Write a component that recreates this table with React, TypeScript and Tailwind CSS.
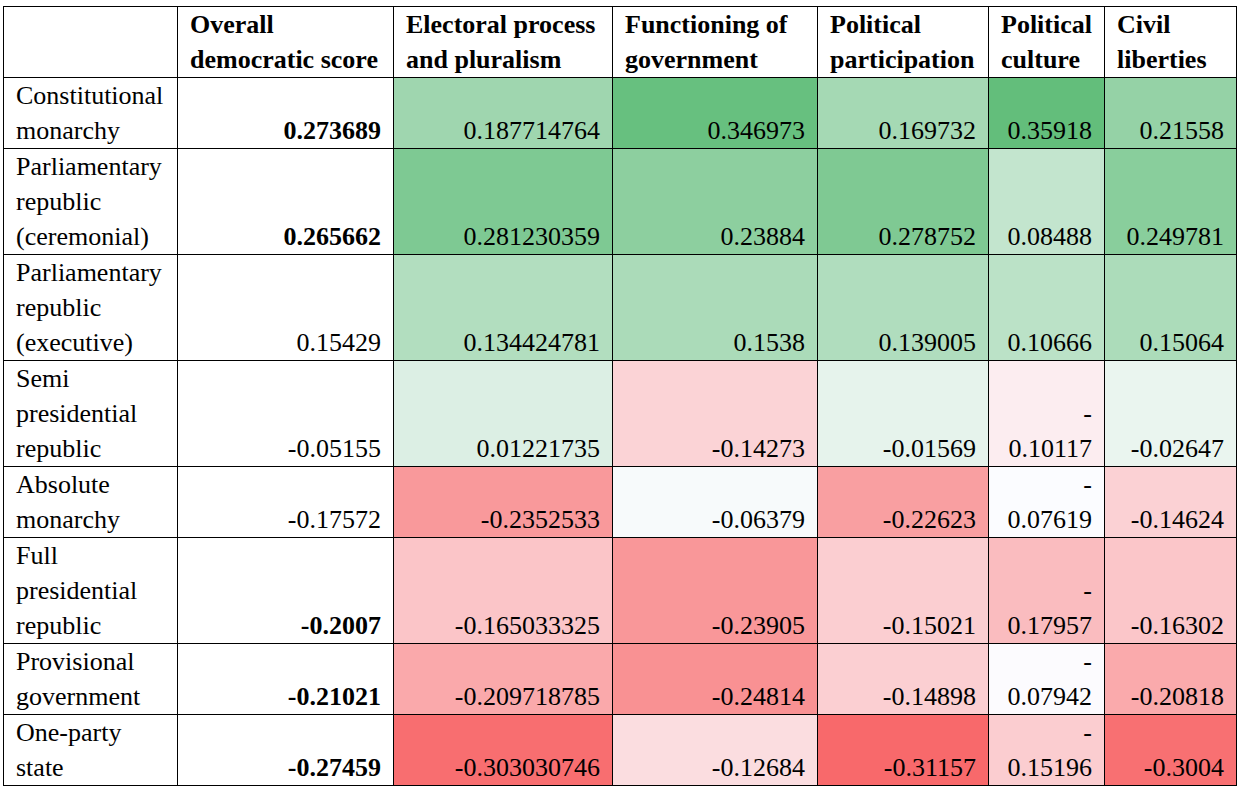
type Row = {
  label: string[];
  overall: string;
  bold: boolean;
  values: string[];
};

const headers: string[][] = [
  ["Overall", "democratic score"],
  ["Electoral process", "and pluralism"],
  ["Functioning of", "government"],
  ["Political", "participation"],
  ["Political", "culture"],
  ["Civil", "liberties"],
];

const rows: Row[] = [
  { label: ["Constitutional", "monarchy"], overall: "0.273689", bold: true, values: ["0.187714764", "0.346973", "0.169732", "0.35918", "0.21558"] },
  { label: ["Parliamentary", "republic", "(ceremonial)"], overall: "0.265662", bold: true, values: ["0.281230359", "0.23884", "0.278752", "0.08488", "0.249781"] },
  { label: ["Parliamentary", "republic", "(executive)"], overall: "0.15429", bold: false, values: ["0.134424781", "0.1538", "0.139005", "0.10666", "0.15064"] },
  { label: ["Semi", "presidential", "republic"], overall: "-0.05155", bold: false, values: ["0.01221735", "-0.14273", "-0.01569", "-0.10117", "-0.02647"] },
  { label: ["Absolute", "monarchy"], overall: "-0.17572", bold: false, values: ["-0.2352533", "-0.06379", "-0.22623", "-0.07619", "-0.14624"] },
  { label: ["Full", "presidential", "republic"], overall: "-0.2007", bold: true, values: ["-0.165033325", "-0.23905", "-0.15021", "-0.17957", "-0.16302"] },
  { label: ["Provisional", "government"], overall: "-0.21021", bold: true, values: ["-0.209718785", "-0.24814", "-0.14898", "-0.07942", "-0.20818"] },
  { label: ["One-party", "state"], overall: "-0.27459", bold: true, values: ["-0.303030746", "-0.12684", "-0.31157", "-0.15196", "-0.3004"] },
];

// colour scale over the five score columns: red at min, white at median, green at max
const all = rows.flatMap((r) => r.values.map(Number)).sort((a, b) => a - b);
const min = all[0];
const max = all[all.length - 1];
const pos = (all.length - 1) * 0.5;
const lo = Math.floor(pos);
const mid = all[lo] + (pos - lo) * (all[lo + 1] - all[lo]);

const RED = [248, 105, 107];
const WHITE = [252, 252, 255];
const GREEN = [99, 190, 123];

function heat(v: number) {
  const to = v >= mid ? GREEN : RED;
  const t = v >= mid ? (v - mid) / (max - mid) : (mid - v) / (mid - min);
  const c = WHITE.map((w, i) => Math.round(w + (to[i] - w) * t));
  return `rgb(${c[0]}, ${c[1]}, ${c[2]})`;
}

const cell = "border-r border-b border-black px-[12px] whitespace-nowrap";
const numCell = `${cell} flex flex-col items-end justify-end text-right`;
const bold = "[font-weight:700]";

function Lines({ lines }: { lines: string[] }) {
  return (
    <>
      {lines.map((l, i) => (
        <div key={i}>{l}</div>
      ))}
    </>
  );
}

export default function App() {
  return (
    <div className="font-['Liberation_Serif']">
      <div className="[font-family:Liberation_Serif,serif]">
        <div className="min-h-screen bg-white pl-[3px] pt-[6px] text-black text-[26px] leading-[35px]">
          <div className="grid w-fit grid-cols-[174px_216px_219px_205px_171px_116px_132px] border-l border-t border-black">
            {/* header row */}
            <div className={cell}></div>
            {headers.map((h) => (
              <div key={h.join(" ")} className={`${cell} ${bold}`}>
                <Lines lines={h} />
              </div>
            ))}

            {rows.map((row) => (
              <div key={row.label.join(" ")} className="contents">
                <div className={cell}>
                  <Lines lines={row.label} />
                </div>
                <div className={row.bold ? `${numCell} ${bold}` : numCell}>{row.overall}</div>
                {row.values.map((v, i) => {
                  // the narrow Political culture column wraps the minus sign onto its own line
                  const split = i === 3 && v.startsWith("-");
                  return (
                    <div key={i} className={numCell} style={{ backgroundColor: heat(Number(v)) }}>
                      {split ? <Lines lines={["-", v.slice(1)]} /> : <div>{v}</div>}
                    </div>
                  );
                })}
              </div>
            ))}
          </div>
        </div>
      </div>
    </div>
  );
}
